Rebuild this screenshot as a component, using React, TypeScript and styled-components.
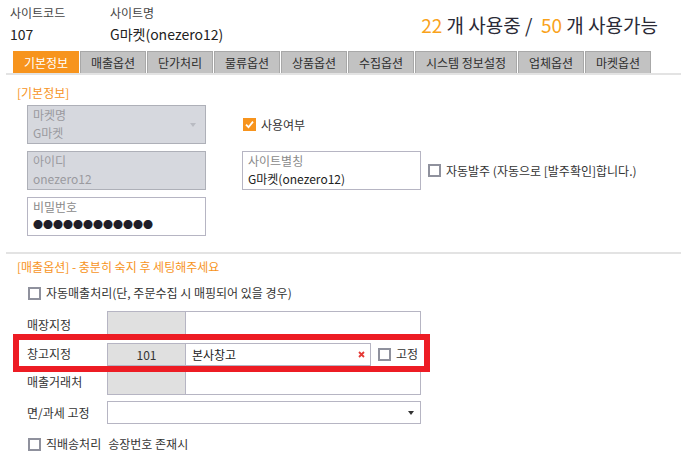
import React from "react";
import styled, { createGlobalStyle, css } from "styled-components";

const ORANGE = "#f7941d";
const COUNT_ORANGE = "#f9a21b";
const TEXT = "#333";
const CELL_BORDER = "#b6b5c3";

const GlobalStyle = createGlobalStyle`
  body {
    margin: 0;
    background: #fff;
    font-family: "Noto Sans CJK KR", "Noto Sans", sans-serif;
    font-size: 12px;
    color: ${TEXT};
  }
`;

const Page = styled.div`
  width: 681px;
  height: 475px;
  overflow: hidden;
`;

const Header = styled.div`
  display: flex;
  align-items: flex-start;
  height: 51px;
  box-sizing: border-box;
  padding: 5px 23px 0 10px;
`;

const HeaderField = styled.div<{ $width?: number }>`
  width: ${(p) => (p.$width ? `${p.$width}px` : "auto")};
  display: flex;
  flex-direction: column;
`;

const HeaderLabel = styled.div`
  line-height: 16px;
  color: #444;
`;

const HeaderValue = styled.div`
  margin-top: 3px;
  font-size: 14px;
  line-height: 20px;
  color: #222;
`;

const Counter = styled.div`
  margin-left: auto;
  margin-top: 8px;
  font-size: 19px;
  line-height: 24px;
  color: #2a2a36;
  white-space: pre;
`;

const Num = styled.span`
  color: ${COUNT_ORANGE};
`;

const Tabs = styled.div`
  display: flex;
  gap: 1px;
  padding-left: 13px;
  height: 22px;
`;

const Tab = styled.div<{ $width: number; $active?: boolean }>`
  width: ${(p) => p.$width}px;
  box-sizing: border-box;
  border: 1px solid #a8a8a8;
  border-bottom: none;
  background: #c2c2c2;
  color: #2e2e2e;
  text-align: center;
  line-height: 21px;
  ${(p) =>
    p.$active &&
    css`
      background: ${ORANGE};
      border-color: ${ORANGE};
      color: #fff;
    `}
`;

const Rule = styled.div<{ $top?: number }>`
  margin: ${(p) => p.$top ?? 0}px 0 0 6px;
  height: 2px;
  background: #e3e3e3;
`;

const SectionTitle = styled.div<{ $top: number }>`
  margin-top: ${(p) => p.$top}px;
  padding-left: 17px;
  line-height: 16px;
  color: ${ORANGE};
`;

const FormGrid = styled.div`
  display: grid;
  margin: 4px 0 0 27px;
  grid-template-columns: 215px 186px 1fr;
  grid-template-rows: 39px 39px 39px;
  row-gap: 7px;
  grid-template-areas:
    "market use ."
    "login alias order"
    "pw . .";
`;

const Area = styled.div<{ $area: string }>`
  grid-area: ${(p) => p.$area};
  display: flex;
  align-items: center;
`;

const FieldBox = styled.div<{ $disabled?: boolean; $select?: boolean }>`
  position: relative;
  width: 179px;
  height: 39px;
  box-sizing: border-box;
  border: 1px solid ${(p) => (p.$disabled ? "#aeb0b8" : CELL_BORDER)};
  background: ${(p) => (p.$disabled ? "#d6d8de" : "#fff")};
  padding: 0 5px;
  ${(p) =>
    p.$select &&
    css`
      &::after {
        content: "";
        position: absolute;
        right: 9px;
        top: 17px;
        border-left: 3px solid transparent;
        border-right: 3px solid transparent;
        border-top: 4px solid #b9bbc2;
      }
    `}
`;

const FieldLabel = styled.div<{ $disabled?: boolean }>`
  line-height: 17px;
  color: ${(p) => (p.$disabled ? "#9a9a9f" : "#8a8a8a")};
`;

const FieldValue = styled.div<{ $disabled?: boolean }>`
  line-height: 20px;
  color: ${(p) => (p.$disabled ? "#9a9a9f" : "#222")};
`;

const Dots = styled.div`
  line-height: 20px;
  font-size: 10px;
  letter-spacing: 0;
  color: #1f1f2a;
`;

const CheckRow = styled.label<{ $top?: number; $left?: number }>`
  display: flex;
  align-items: center;
  gap: 5px;
  margin: ${(p) => p.$top ?? 0}px 0 0 ${(p) => p.$left ?? 0}px;
  line-height: 18px;
  color: #333;
  white-space: nowrap;
`;

const Box = styled.span<{ $checked?: boolean }>`
  display: inline-flex;
  align-items: center;
  justify-content: center;
  width: 13px;
  height: 13px;
  box-sizing: border-box;
  border: 2px solid ${(p) => (p.$checked ? ORANGE : "#8f919d")};
  background: ${(p) => (p.$checked ? ORANGE : "#fff")};
  flex: none;
`;

function Check({ checked }: { checked?: boolean }) {
  return (
    <Box $checked={checked}>
      {checked && (
        <svg width="9" height="9" viewBox="0 0 9 9">
          <path d="M1 4.6 L3.5 7.2 L8 1.6" stroke="#fff" strokeWidth="1.8" fill="none" />
        </svg>
      )}
    </Box>
  );
}

const Options = styled.div`
  position: relative;
  margin-top: 9px;
  padding-left: 27px;
`;

const OptionRow = styled.div<{ $height: number; $top?: number }>`
  display: flex;
  align-items: center;
  height: ${(p) => p.$height}px;
  margin-top: ${(p) => p.$top ?? 0}px;
`;

const RowLabel = styled.div`
  width: 80px;
  flex: none;
  line-height: 18px;
`;

const CodeCell = styled.div<{ $height?: number }>`
  width: 79px;
  height: ${(p) => (p.$height ? `${p.$height}px` : "100%")};
  box-sizing: border-box;
  border: 1px solid ${CELL_BORDER};
  background: #e0e0e0;
  display: flex;
  align-items: center;
  justify-content: center;
  color: #333;
`;

const NameCell = styled.div<{ $width: number; $height?: number }>`
  position: relative;
  width: ${(p) => p.$width}px;
  height: ${(p) => (p.$height ? `${p.$height}px` : "100%")};
  box-sizing: border-box;
  border: 1px solid ${CELL_BORDER};
  border-left: none;
  background: #fff;
  display: flex;
  align-items: center;
  padding-left: 6px;
  color: #222;
`;

const Clear = styled.span`
  position: absolute;
  right: 5px;
  top: 50%;
  margin-top: -3px;
  display: flex;
`;

const Select = styled.div`
  position: relative;
  width: 314px;
  height: 23px;
  box-sizing: border-box;
  border: 1px solid ${CELL_BORDER};
  background: #fff;
  &::after {
    content: "";
    position: absolute;
    right: 6px;
    top: 9px;
    border-left: 3px solid transparent;
    border-right: 3px solid transparent;
    border-top: 4px solid #333;
  }
`;

const Mark = styled.div`
  position: absolute;
  left: 13px;
  top: 23px;
  width: 417px;
  height: 38px;
  box-sizing: border-box;
  border: 6px solid #ed1c24;
  pointer-events: none;
`;

const Gap = styled.span`
  margin-left: 7px;
`;

const tabs = [
  { name: "기본정보", width: 66, active: true },
  { name: "매출옵션", width: 66 },
  { name: "단가처리", width: 66 },
  { name: "물류옵션", width: 66 },
  { name: "상품옵션", width: 66 },
  { name: "수집옵션", width: 66 },
  { name: "시스템 정보설정", width: 102 },
  { name: "업체옵션", width: 66 },
  { name: "마켓옵션", width: 66 },
];

export default function App() {
  return (
    <Page>
      <GlobalStyle />
      <Header>
        <HeaderField $width={100}>
          <HeaderLabel>사이트코드</HeaderLabel>
          <HeaderValue>107</HeaderValue>
        </HeaderField>
        <HeaderField>
          <HeaderLabel>사이트명</HeaderLabel>
          <HeaderValue>G마켓(onezero12)</HeaderValue>
        </HeaderField>
        <Counter>
          <Num>22</Num> 개 사용중 /  <Num>50</Num> 개 사용가능
        </Counter>
      </Header>

      <Tabs>
        {tabs.map((t) => (
          <Tab key={t.name} $width={t.width} $active={t.active}>
            {t.name}
          </Tab>
        ))}
      </Tabs>
      <Rule />

      <SectionTitle $top={10}>[기본정보]</SectionTitle>
      <FormGrid>
        <Area $area="market">
          <FieldBox $disabled $select>
            <FieldLabel $disabled>마켓명</FieldLabel>
            <FieldValue $disabled>G마켓</FieldValue>
          </FieldBox>
        </Area>
        <Area $area="use">
          <CheckRow $left={1}>
            <Check checked />
            <span>사용여부</span>
          </CheckRow>
        </Area>
        <Area $area="login">
          <FieldBox $disabled>
            <FieldLabel $disabled>아이디</FieldLabel>
            <FieldValue $disabled>onezero12</FieldValue>
          </FieldBox>
        </Area>
        <Area $area="alias">
          <FieldBox>
            <FieldLabel>사이트별칭</FieldLabel>
            <FieldValue>G마켓(onezero12)</FieldValue>
          </FieldBox>
        </Area>
        <Area $area="order">
          <CheckRow>
            <Check />
            <span>자동발주 (자동으로 [발주확인]합니다.)</span>
          </CheckRow>
        </Area>
        <Area $area="pw">
          <FieldBox>
            <FieldLabel>비밀번호</FieldLabel>
            <Dots>●●●●●●●●●●●●</Dots>
          </FieldBox>
        </Area>
      </FormGrid>

      <Rule $top={16} />
      <SectionTitle $top={5}>[매출옵션] - 충분히 숙지 후 세팅해주세요</SectionTitle>
      <CheckRow $top={9} $left={28}>
        <Check />
        <span>자동매출처리(단, 주문수집 시 매핑되어 있을 경우)</span>
      </CheckRow>

      <Options>
        <OptionRow $height={28}>
          <RowLabel>매장지정</RowLabel>
          <CodeCell />
          <NameCell $width={235} />
        </OptionRow>
        <OptionRow $height={30}>
          <RowLabel>창고지정</RowLabel>
          <CodeCell $height={23}>101</CodeCell>
          <NameCell $width={185} $height={23}>
            본사창고
            <Clear>
              <svg width="7" height="7" viewBox="0 0 7 7">
                <path d="M1 1 L6 6 M6 1 L1 6" stroke="#e53935" strokeWidth="1.8" />
              </svg>
            </Clear>
          </NameCell>
          <CheckRow $left={7}>
            <Check />
            <span>고정</span>
          </CheckRow>
        </OptionRow>
        <OptionRow $height={26}>
          <RowLabel>매출거래처</RowLabel>
          <CodeCell />
          <NameCell $width={235} />
        </OptionRow>
        <OptionRow $height={23} $top={6}>
          <RowLabel>면/과세 고정</RowLabel>
          <Select />
        </OptionRow>
        <CheckRow $top={11} $left={1}>
          <Check />
          <span>
            직배송처리<Gap>송장번호 존재시</Gap>
          </span>
        </CheckRow>
        <Mark />
      </Options>
    </Page>
  );
}
